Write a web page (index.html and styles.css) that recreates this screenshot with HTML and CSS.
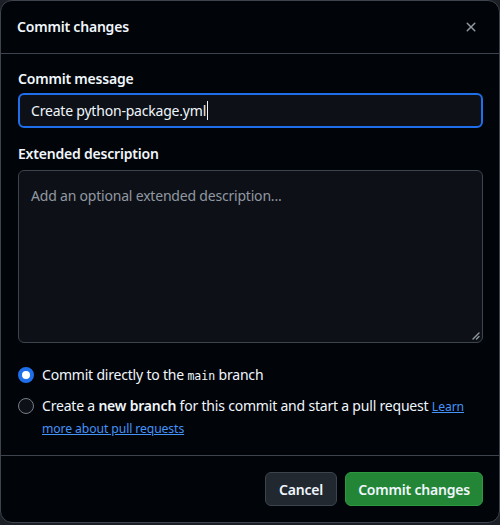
FILE: index.html
```html
<!DOCTYPE html>
<html>
<head>
<meta charset="utf-8">
<link rel="stylesheet" href="styles.css">
</head>
<body>
<div class="dialog">
  <div class="header">
    <h1 class="title">Commit changes</h1>
    <button class="close" aria-label="Close">
      <svg width="16" height="16" viewBox="0 0 16 16"><path fill="currentColor" d="M3.72 3.72a.75.75 0 0 1 1.06 0L8 6.94l3.22-3.22a.749.749 0 0 1 1.275.326.749.749 0 0 1-.215.734L9.06 8l3.22 3.22a.749.749 0 0 1-.326 1.275.749.749 0 0 1-.734-.215L8 9.06l-3.22 3.22a.751.751 0 0 1-1.042-.018.751.751 0 0 1-.018-1.042L6.94 8 3.72 4.78a.75.75 0 0 1 0-1.06Z"/></svg>
    </button>
  </div>
  <div class="body">
    <label class="label">Commit message</label>
    <div class="input">Create python-package.yml<span class="caret"></span></div>
    <label class="label label-ext">Extended description</label>
    <div class="textarea">
      <span class="placeholder">Add an optional extended description...</span>
      <svg class="grip" width="9" height="9" viewBox="0 0 9 9"><path d="M8 2 L2 8 M8 5.5 L5.5 8" stroke="#9198a1" stroke-width="1.4" stroke-linecap="round"/></svg>
    </div>
    <div class="options">
      <div class="option">
        <span class="radio checked"></span>
        <span class="opt-text">Commit directly to the <code>main</code> branch</span>
      </div>
      <div class="option">
        <span class="radio"></span>
        <span class="opt-text">Create a <strong>new branch</strong> for this commit and start a pull request <a href="#">Learn more about pull requests</a></span>
      </div>
    </div>
  </div>
  <div class="footer">
    <button class="btn btn-default">Cancel</button>
    <button class="btn btn-primary">Commit changes</button>
  </div>
</div>
</body>
</html>
```
FILE: styles.css
```css
* { box-sizing: border-box; }
html, body {
  margin: 0;
  padding: 0;
  background: #1c2026;
  width: 500px;
  height: 525px;
  overflow: hidden;
}
body {
  font-family: "Noto Sans", "Open Sans", sans-serif;
  font-size: 14px;
  line-height: 20px;
  letter-spacing: -0.2px;
  color: #f0f6fc;
}
.dialog {
  width: 500px;
  height: 523px;
  background: #010409;
  border: 1px solid #3d444d;
  border-radius: 12px;
  display: flex;
  flex-direction: column;
  overflow: hidden;
}
.header {
  height: 53px;
  flex: none;
  display: flex;
  align-items: center;
  justify-content: space-between;
  padding: 0 12px 0 16px;
  border-bottom: 1px solid #3d444d;
}
.title {
  margin: 0;
  font-size: 14px;
  font-weight: 600;
  line-height: 20px;
}
.close {
  width: 32px;
  height: 32px;
  border: 0;
  background: transparent;
  color: #9198a1;
  display: flex;
  align-items: center;
  justify-content: center;
  padding: 0;
}
.body {
  flex: 1;
  padding: 15px 16px 0 17px;
  display: flex;
  flex-direction: column;
}
.label {
  font-weight: 600;
  display: block;
  margin-bottom: 4px;
}
.label-ext { margin-top: 16px; margin-bottom: 6px; }
.input {
  height: 35px;
  border: 2px solid #1f6feb;
  border-radius: 6px;
  background: #0d1117;
  padding: 0 11px;
  display: flex;
  align-items: center;
  font-size: 14px;
}
.caret {
  display: inline-block;
  width: 1px;
  height: 19px;
  margin-left: 1px;
  background: #f0f6fc;
}
.textarea {
  position: relative;
  height: 173px;
  border: 1px solid #3d444d;
  border-radius: 6px;
  background: #0d1117;
  padding: 15px 12px;
}
.placeholder { color: #9198a1; }
.grip {
  position: absolute;
  right: 2px;
  bottom: 2px;
}
.options {
  margin-top: 21px;
  display: flex;
  flex-direction: column;
  gap: 9px;
}
.option {
  display: flex;
  align-items: flex-start;
  gap: 8px;
  line-height: 22px;
}
.radio {
  flex: none;
  width: 16px;
  height: 16px;
  margin-top: 3px;
  border-radius: 50%;
  border: 1px solid #757d87;
  background: #0d1117;
}
.radio.checked {
  border: 4px solid #1f6feb;
  background: #ffffff;
}
code {
  font-family: "DejaVu Sans Mono", "Liberation Mono", monospace;
  font-size: 11.5px;
  letter-spacing: 0;
  line-height: 1;
}
strong { font-weight: 600; }
a {
  color: #4493f8;
  font-size: 12.2px;
  line-height: 1;
  letter-spacing: -0.1px;
  text-decoration: underline;
}
.footer {
  flex: none;
  border-top: 1px solid #3d444d;
  padding: 16px 16px 16px;
  display: flex;
  justify-content: flex-end;
  gap: 8px;
}
.btn {
  height: 34px;
  border-radius: 6px;
  font-family: inherit;
  font-size: 14px;
  font-weight: 600;
  letter-spacing: -0.2px;
  padding: 0 12px;
  color: #f0f6fc;
  border: 1px solid #3d444d;
}
.btn-default { background: #212830; padding: 0 13px; }
.btn-primary { background: #238636; border-color: #2e9a40; }
```
